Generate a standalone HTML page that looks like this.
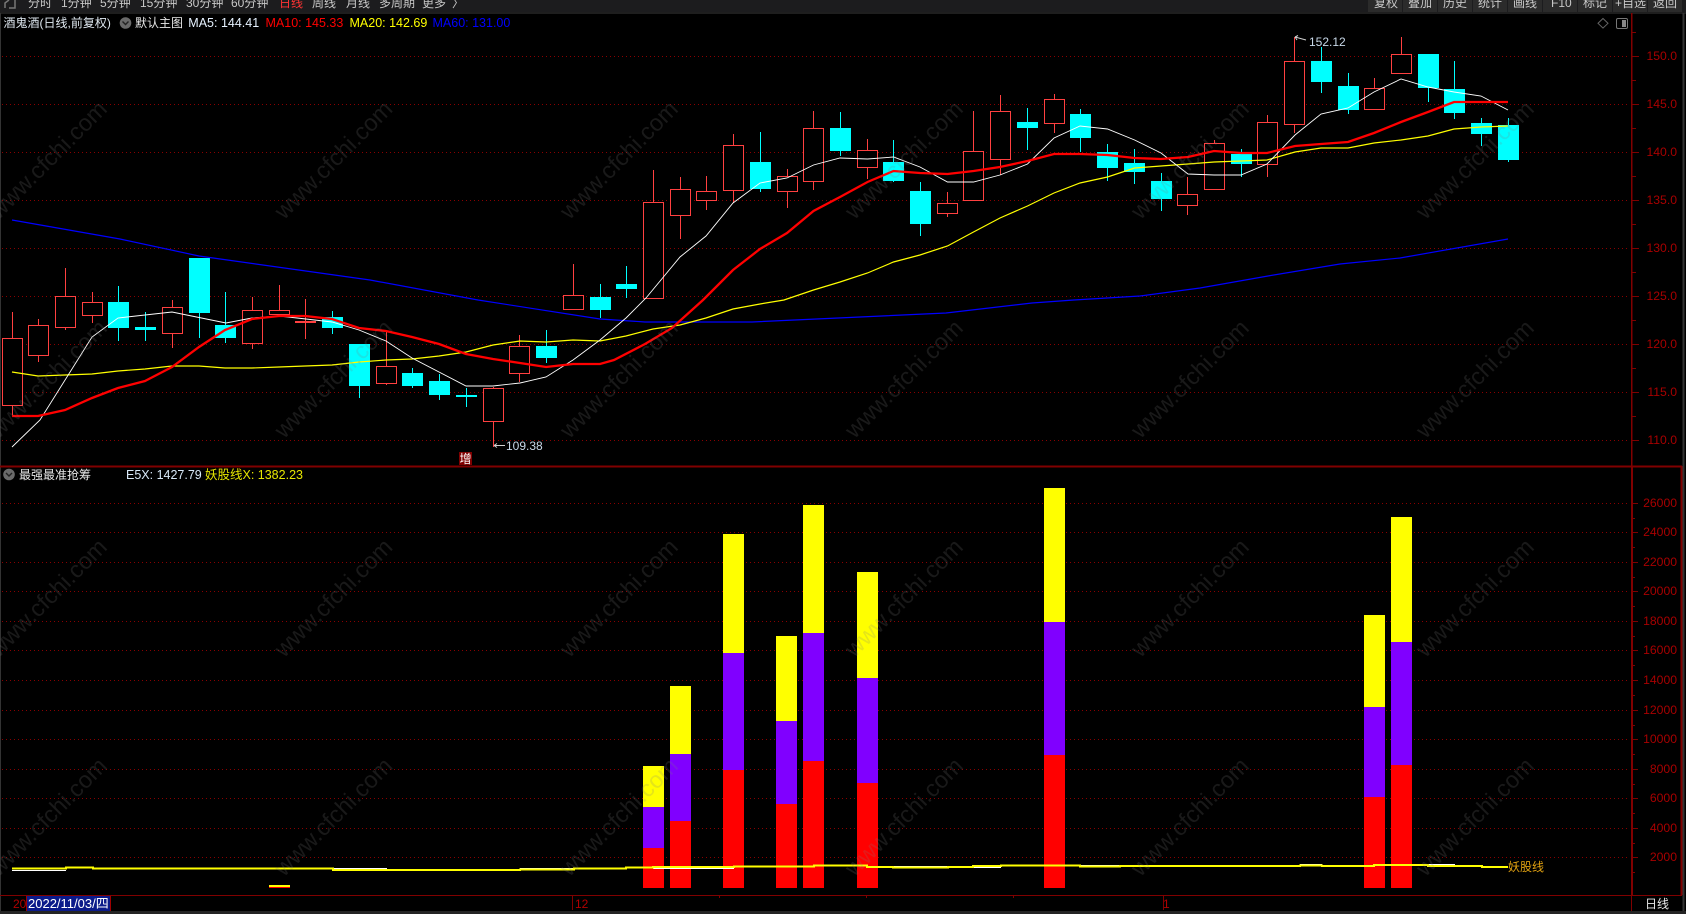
<!DOCTYPE html>
<html lang="zh">
<head>
<meta charset="utf-8">
<title>酒鬼酒</title>
<style>
html,body{margin:0;padding:0;background:#000;width:1686px;height:914px;overflow:hidden}
svg{display:block;position:absolute;left:0;top:0}
text{font-family:"Liberation Sans","Noto Sans CJK SC",sans-serif;font-size:12px}
.wm text{font-size:23.5px;fill:rgb(125,125,125);fill-opacity:.2}
.t text{fill:#c8c8c8}
.ax text{fill:#a80000;text-anchor:end;font-size:12.2px}
.lg{font-size:12.5px}
</style>
</head>
<body>
<svg width="1686" height="914" viewBox="0 0 1686 914" xmlns="http://www.w3.org/2000/svg">
<rect width="1686" height="914" fill="#000"/>

<!-- top bar -->
<rect x="0" y="0" width="1686" height="12" fill="#1c1c1e"/>
<rect x="0" y="12.5" width="1686" height="1" fill="#3c3c3c"/>
<path d="M5 8V3L9 0M9 8H15V0" fill="none" stroke="#777" stroke-width="1.5"/>
<g fill="#2b2b2b">
<rect x="1368" y="0" width="34" height="12"/><rect x="1403" y="0" width="34" height="12"/><rect x="1438" y="0" width="34" height="12"/><rect x="1473" y="0" width="34" height="12"/><rect x="1508" y="0" width="34" height="12"/><rect x="1543" y="0" width="34" height="12"/><rect x="1578" y="0" width="34" height="12"/><rect x="1613" y="0" width="34" height="12"/><rect x="1648" y="0" width="34" height="12"/>
</g>
<g class="t">
<text x="28" y="7">分时</text>
<text x="61" y="7">1分钟</text>
<text x="100" y="7">5分钟</text>
<text x="140" y="7">15分钟</text>
<text x="186" y="7">30分钟</text>
<text x="231" y="7">60分钟</text>
<text x="279" y="7" style="fill:#ff3333">日线</text>
<text x="312" y="7">周线</text>
<text x="346" y="7">月线</text>
<text x="379" y="7">多周期</text>
<text x="422" y="7">更多</text>
<text x="452" y="7">〉</text>
<text x="1374" y="7">复权</text>
<text x="1408" y="7">叠加</text>
<text x="1443" y="7">历史</text>
<text x="1478" y="7">统计</text>
<text x="1513" y="7">画线</text>
<text x="1551" y="7">F10</text>
<text x="1583" y="7">标记</text>
<text x="1615" y="7">+自选</text>
<text x="1653" y="7">返回</text>
</g>

<!-- grids -->
<g fill="none" stroke="#8a0000" stroke-width="1" stroke-dasharray="1 3" shape-rendering="crispEdges">
<path d="M2 56.5H1628M2 104.5H1628M2 152.5H1628M2 200.5H1628M2 248.5H1628M2 296.5H1628M2 344.5H1628M2 392.5H1628M2 440.5H1628"/>
<path d="M2 503.5H1628M2 532.5H1628M2 562.5H1628M2 591.5H1628M2 621.5H1628M2 650.5H1628M2 680.5H1628M2 710.5H1628M2 739.5H1628M2 769.5H1628M2 798.5H1628M2 828.5H1628M2 857.5H1628"/>
</g>

<!-- frame -->
<g fill="none" shape-rendering="crispEdges">
<path d="M0.5 13V911" stroke="#333"/>
<path d="M1683.5 13V911" stroke="#333" stroke-width="2"/>
<path d="M1631.5 13V466" stroke="#800000" stroke-width="1.5"/>
<path d="M1632 466V895" stroke="#800000" stroke-width="2"/>
<path d="M1681.5 466V895" stroke="#800000" stroke-width="2"/>
<path d="M0 466.5H1682" stroke="#800000" stroke-width="2"/>
<path d="M0 895.5H1682" stroke="#800000"/>
<path d="M1631.5 895V911" stroke="#800000"/>
<path d="M1632 56.5h7M1632 104.5h7M1632 152.5h7M1632 200.5h7M1632 248.5h7M1632 296.5h7M1632 344.5h7M1632 392.5h7M1632 440.5h7M1632 80.5h4M1632 128.5h4M1632 176.5h4M1632 224.5h4M1632 272.5h4M1632 320.5h4M1632 368.5h4M1632 416.5h4M1632 32.5h4" stroke="#800000"/>
<path d="M1632 503.5h6M1632 532.5h6M1632 562.5h6M1632 591.5h6M1632 621.5h6M1632 650.5h6M1632 680.5h6M1632 710.5h6M1632 739.5h6M1632 769.5h6M1632 798.5h6M1632 828.5h6M1632 857.5h6M1632 518.5h3M1632 547.5h3M1632 577.5h3M1632 606.5h3M1632 636.5h3M1632 665.5h3M1632 695.5h3M1632 725.5h3M1632 754.5h3M1632 784.5h3M1632 813.5h3M1632 843.5h3M1632 872.5h3" stroke="#800000"/>
<path d="M572.5 895V910M719.5 895v3M866.5 895v3M1013.5 895v3M1163.5 895V910" stroke="#800000"/>
</g>

<!-- axis labels -->
<g class="ax">
<text x="1677" y="60">150.0</text>
<text x="1677" y="108">145.0</text>
<text x="1677" y="156">140.0</text>
<text x="1677" y="204">135.0</text>
<text x="1677" y="252">130.0</text>
<text x="1677" y="300">125.0</text>
<text x="1677" y="348">120.0</text>
<text x="1677" y="396">115.0</text>
<text x="1677" y="444">110.0</text>
<text x="1677" y="507">26000</text>
<text x="1677" y="536">24000</text>
<text x="1677" y="566">22000</text>
<text x="1677" y="595">20000</text>
<text x="1677" y="625">18000</text>
<text x="1677" y="654">16000</text>
<text x="1677" y="684">14000</text>
<text x="1677" y="714">12000</text>
<text x="1677" y="743">10000</text>
<text x="1677" y="773">8000</text>
<text x="1677" y="802">6000</text>
<text x="1677" y="832">4000</text>
<text x="1677" y="861">2000</text>
</g>

<!-- red candles -->
<path fill="#000" stroke="#ff4040" stroke-width="1" shape-rendering="crispEdges" d="
M12.5 312V338.5M12.5 405.5V416M2.5 338.5H22.5V405.5H2.5Z
M38.5 319V325.5M38.5 355.5V362M28.5 325.5H48.5V355.5H28.5Z
M65.5 268V296.5M65.5 327.5V330M55.5 296.5H75.5V327.5H55.5Z
M92.5 292V302.5M92.5 315.5V323M82.5 302.5H102.5V315.5H82.5Z
M172.5 300V307.5M172.5 333.5V348M162.5 307.5H182.5V333.5H162.5Z
M252.5 297V310.5M252.5 343.5V349M242.5 310.5H262.5V343.5H242.5Z
M279.5 285V310.5M269.5 310.5H289.5V314.5H269.5Z
M305.5 299V321.5M305.5 322.5V339M295.5 321.5H315.5V322.5H295.5Z
M386.5 332V366.5M386.5 383.5V385M376.5 366.5H396.5V383.5H376.5Z
M493.5 387V388.5M493.5 421.5V447M483.5 388.5H503.5V421.5H483.5Z
M519.5 335V346.5M519.5 373.5V382M509.5 346.5H529.5V373.5H509.5Z
M573.5 264V295.5M563.5 295.5H583.5V309.5H563.5Z
M653.5 170V202.5M643.5 202.5H663.5V298.5H643.5Z
M680.5 177V189.5M680.5 215.5V239M670.5 189.5H690.5V215.5H670.5Z
M706.5 176V191.5M706.5 200.5V210M696.5 191.5H716.5V200.5H696.5Z
M733.5 134V145.5M733.5 190.5V203M723.5 145.5H743.5V190.5H723.5Z
M787.5 169V176.5M787.5 191.5V208M777.5 176.5H797.5V191.5H777.5Z
M813.5 111V128.5M813.5 181.5V190M803.5 128.5H823.5V181.5H803.5Z
M867.5 139V150.5M867.5 167.5V179M857.5 150.5H877.5V167.5H857.5Z
M947.5 192V203.5M947.5 213.5V217M937.5 203.5H957.5V213.5H937.5Z
M973.5 111V151.5M963.5 151.5H983.5V200.5H963.5Z
M1000.5 95V111.5M1000.5 159.5V175M990.5 111.5H1010.5V159.5H990.5Z
M1054.5 94V99.5M1054.5 123.5V133M1044.5 99.5H1064.5V123.5H1044.5Z
M1187.5 177V194.5M1187.5 205.5V215M1177.5 194.5H1197.5V205.5H1177.5Z
M1214.5 140V143.5M1204.5 143.5H1224.5V189.5H1204.5Z
M1267.5 115V122.5M1267.5 164.5V177M1257.5 122.5H1277.5V164.5H1257.5Z
M1294.5 37V61.5M1294.5 124.5V133M1284.5 61.5H1304.5V124.5H1284.5Z
M1374.5 78V88.5M1364.5 88.5H1384.5V109.5H1364.5Z
M1401.5 37V54.5M1391.5 54.5H1411.5V73.5H1391.5Z"/>

<!-- cyan candles -->
<path fill="none" stroke="#00ffff" stroke-width="1" shape-rendering="crispEdges" d="
M118.5 286V341M145.5 312V341M199.5 310V338M225.5 292V343M332.5 311V334M359.5 344V398M412.5 368V388M439.5 374V400M466.5 388V407M546.5 330V363M600.5 284V318M626.5 266V298M760.5 132V192M840.5 112V156M893.5 140V182M920.5 182V236M1027.5 108V150M1080.5 109V152M1107.5 144V181M1134.5 149V184M1161.5 173V211M1241.5 149V177M1321.5 47V93M1348.5 73V114M1428.5 54V102M1454.5 61V119M1481.5 118V146M1508.5 118V162"/>
<path fill="#00ffff" shape-rendering="crispEdges" d="
M108 302h21v26h-21zM135 327h21v3h-21zM189 258h21v55h-21zM215 325h21v13h-21zM322 317h21v11h-21zM349 344h21v42h-21zM402 373h21v13h-21zM429 381h21v14h-21zM456 395h21v2h-21zM536 346h21v12h-21zM590 297h21v13h-21zM616 284h21v5h-21zM750 162h21v27h-21zM830 128h21v23h-21zM883 162h21v19h-21zM910 191h21v33h-21zM1017 122h21v6h-21zM1070 114h21v24h-21zM1097 152h21v16h-21zM1124 163h21v9h-21zM1151 181h21v18h-21zM1231 154h21v10h-21zM1311 61h21v21h-21zM1338 86h21v24h-21zM1418 54h21v34h-21zM1444 89h21v24h-21zM1471 123h21v11h-21zM1498 125h21v35h-21z"/>

<!-- MA lines -->
<polyline fill="none" stroke="#0000ff" stroke-width="1.2" points="12,220 120,239 199,256 370,280 478,300 600,319 645,322 752,322 860,317 946,313 1032,303 1074,300 1140,296 1200,288 1268,276 1340,264 1400,258 1508,239"/>
<polyline fill="none" stroke="#ffff00" stroke-width="1.2" points="12,372 38,376 65,375 92,374 118,371 145,369 172,366 199,366 225,368 252,368 279,367 305,366 332,365 359,362 386,360 412,359 439,356 466,352 493,345 520,341 546,342 573,340 600,341 626,336 653,329 680,325 706,318 733,309 760,304 784,300 813.5,290 840,282 867.5,273 893.5,262 920,255 947.5,246 973.5,232 1000,218 1027.5,206 1054,193 1080,183 1107.5,177 1134.6,168 1161,166 1188,164 1214,162 1241,161 1267,160 1295,152 1321,148 1348,148 1374,143 1401,140 1428,136 1454,129 1481,127 1508,126"/>
<polyline fill="none" stroke="#ffffff" stroke-width="0.9" points="12,447 40,420 92,337 118,318 172,312 226,323 252,318 279,316 306,319 332,322 359,330 386,341 412,358 466,386 493,386 520,383 546,377 573,360 600,340 626,318 646,298 680,257 706,236 733,203 760,183 787,178 813.5,165 840,158 867.5,159 893.5,157 920,167 947.5,182 973.5,182 1000,175 1027.5,164 1054,138 1080,126 1107.5,129 1134.6,140 1161,153 1188,174 1214,175 1241,175 1267,164 1295,135 1321,114 1348,108 1374,92 1401,79 1428,87 1454,92 1481,96 1508,110"/>
<polyline fill="none" stroke="#ff0000" stroke-width="2.3" points="12,416 38,416 65,410 92,398 118,388 145,381 172,367 199,347 225,330 252,319 279,316 305,316 332,319 359,328 386,331 412,337 439,344 466,354 493,359 520,363 546,367 573,364 600,364 614,360 645,344 672,328 703,300 733,270 760,249 787,233 813.5,211 840,197 867.5,182 893.5,171 920,173 947.5,174 973.5,171 1000,167 1027.5,161 1054,154 1080,154 1107.5,155 1134.6,158 1161,159 1188,157 1214,151 1241,153 1267,153 1295,146 1321,144 1348,142 1374,133 1401,122 1428,112 1454,102 1481,102 1508,102"/>

<!-- high/low markers -->
<path d="M1295 37L1306 40M1295 37l3-1.5M1295 37l2 3" fill="none" stroke="#d0d0d0"/>
<text x="1309" y="46" fill="#c8d8e8">152.12</text>
<path d="M494 445.5H505M494 445.5l3-2M494 445.5l3 2" fill="none" stroke="#d0d0d0"/>
<text x="506" y="450" fill="#c8d8e8">109.38</text>
<rect x="459" y="452" width="13" height="13" fill="#800000"/>
<text x="459.5" y="463" fill="#fff" style="font-size:12px">增</text>

<!-- legends -->
<text x="3.5" y="27" fill="#dfe8f0">酒鬼酒(日线,前复权)</text>
<circle cx="125.5" cy="23" r="5.8" fill="#6a6a6a"/>
<path d="M122.5 21.5l3 3 3-3" fill="none" stroke="#222" stroke-width="1.4"/>
<text x="135" y="27" fill="#e8e8e8">默认主图</text>
<text class="lg" x="188.3" y="27" fill="#e6f2ff">MA5: 144.41</text>
<text class="lg" x="265.5" y="27" fill="#ff0000">MA10: 145.33</text>
<text class="lg" x="349.5" y="27" fill="#ffff00">MA20: 142.69</text>
<text class="lg" x="432.5" y="27" fill="#0000ff">MA60: 131.00</text>
<path d="M1603 18.5l5 4.8-5 4.8-5-4.8z" fill="none" stroke="#666"/>
<rect x="1616.5" y="18.5" width="11" height="10" rx="1.5" fill="none" stroke="#777"/>
<rect x="1622" y="20" width="4" height="7" fill="#888"/>

<circle cx="9" cy="474.5" r="5.8" fill="#6a6a6a"/>
<path d="M6 473l3 3 3-3" fill="none" stroke="#222" stroke-width="1.4"/>
<text x="19" y="479" fill="#e8e8e8">最强最准抢筹</text>
<text class="lg" x="126" y="479" fill="#d8e8f8">E5X: 1427.79</text>
<text class="lg" x="205" y="479" fill="#e6e600">妖股线X: 1382.23</text>

<!-- stacked bars -->
<g shape-rendering="crispEdges">
<rect x="643" y="766" width="21" height="41" fill="#ffff00"/><rect x="643" y="807" width="21" height="41" fill="#8000ff"/><rect x="643" y="848" width="21" height="40" fill="#ff0000"/>
<rect x="670" y="686" width="21" height="68" fill="#ffff00"/><rect x="670" y="754" width="21" height="67" fill="#8000ff"/><rect x="670" y="821" width="21" height="67" fill="#ff0000"/>
<rect x="723" y="534" width="21" height="119" fill="#ffff00"/><rect x="723" y="653" width="21" height="117" fill="#8000ff"/><rect x="723" y="770" width="21" height="118" fill="#ff0000"/>
<rect x="776" y="636" width="21" height="85" fill="#ffff00"/><rect x="776" y="721" width="21" height="83" fill="#8000ff"/><rect x="776" y="804" width="21" height="84" fill="#ff0000"/>
<rect x="803" y="505" width="21" height="128" fill="#ffff00"/><rect x="803" y="633" width="21" height="128" fill="#8000ff"/><rect x="803" y="761" width="21" height="127" fill="#ff0000"/>
<rect x="857" y="572" width="21" height="106" fill="#ffff00"/><rect x="857" y="678" width="21" height="105" fill="#8000ff"/><rect x="857" y="783" width="21" height="105" fill="#ff0000"/>
<rect x="1044" y="488" width="21" height="134" fill="#ffff00"/><rect x="1044" y="622" width="21" height="133" fill="#8000ff"/><rect x="1044" y="755" width="21" height="133" fill="#ff0000"/>
<rect x="1364" y="615" width="21" height="92" fill="#ffff00"/><rect x="1364" y="707" width="21" height="90" fill="#8000ff"/><rect x="1364" y="797" width="21" height="91" fill="#ff0000"/>
<rect x="1391" y="517" width="21" height="125" fill="#ffff00"/><rect x="1391" y="642" width="21" height="123" fill="#8000ff"/><rect x="1391" y="765" width="21" height="123" fill="#ff0000"/>
<rect x="269" y="885" width="21" height="2" fill="#ffff00"/><rect x="269" y="887" width="21" height="1" fill="#ff0000"/>
</g>

<!-- base line -->
<g fill="none" shape-rendering="crispEdges">
<path stroke="#ffffff" stroke-width="1" d="M12 870.5H66M333 868.5H387M520 868.5H574M653 868.5H734M893 866.5H948M1001 867.5H973M1080 865.5H1120M1300 864.5H1322M1428 864.5H1455"/>
<path stroke="#ffff00" stroke-width="2" d="M12 868.5H66V867.5H93V868.5H333V870H520V869.5H574V868.5H626V867.5H653V867H734V866.5H814V865.5H867V867H893V867.5H948V867H973V866H1001V865.5H1080V866.5H1120V866H1300V865.5H1322V866H1374V865H1428V866H1482V867H1508"/>
</g>
<text x="1508" y="871" fill="#e0a010" style="font-size:12px">妖股线</text>

<!-- bottom axis -->
<text x="13" y="908" fill="#b00000">20</text>
<rect x="27" y="896" width="83" height="15" fill="#0b1a8a"/>
<path d="M26.5 896V911M110.5 896V911" stroke="#a00000" shape-rendering="crispEdges"/>
<text x="28" y="908" fill="#fff" style="font-size:13px">2022/11/03/四</text>
<text x="575" y="908" fill="#b00000">12</text>
<text x="1163" y="908" fill="#b00000">1</text>
<text x="1645" y="908" fill="#e8e8e8">日线</text>
<rect x="0" y="911" width="1686" height="3" fill="#242424"/>

<!-- watermarks -->
<g class="wm" text-anchor="middle" dominant-baseline="middle">
<text transform="translate(49,161) rotate(-45)">www.cfchi.com</text>
<text transform="translate(334.5,161) rotate(-45)">www.cfchi.com</text>
<text transform="translate(620,161) rotate(-45)">www.cfchi.com</text>
<text transform="translate(905,161) rotate(-45)">www.cfchi.com</text>
<text transform="translate(1191,161) rotate(-45)">www.cfchi.com</text>
<text transform="translate(1476,161) rotate(-45)">www.cfchi.com</text>
<text transform="translate(49,380) rotate(-45)">www.cfchi.com</text>
<text transform="translate(334.5,380) rotate(-45)">www.cfchi.com</text>
<text transform="translate(620,380) rotate(-45)">www.cfchi.com</text>
<text transform="translate(905,380) rotate(-45)">www.cfchi.com</text>
<text transform="translate(1191,380) rotate(-45)">www.cfchi.com</text>
<text transform="translate(1476,380) rotate(-45)">www.cfchi.com</text>
<text transform="translate(49,599) rotate(-45)">www.cfchi.com</text>
<text transform="translate(334.5,599) rotate(-45)">www.cfchi.com</text>
<text transform="translate(620,599) rotate(-45)">www.cfchi.com</text>
<text transform="translate(905,599) rotate(-45)">www.cfchi.com</text>
<text transform="translate(1191,599) rotate(-45)">www.cfchi.com</text>
<text transform="translate(1476,599) rotate(-45)">www.cfchi.com</text>
<text transform="translate(49,818) rotate(-45)">www.cfchi.com</text>
<text transform="translate(334.5,818) rotate(-45)">www.cfchi.com</text>
<text transform="translate(620,818) rotate(-45)">www.cfchi.com</text>
<text transform="translate(905,818) rotate(-45)">www.cfchi.com</text>
<text transform="translate(1191,818) rotate(-45)">www.cfchi.com</text>
<text transform="translate(1476,818) rotate(-45)">www.cfchi.com</text>
</g>
</svg>
</body>
</html>
